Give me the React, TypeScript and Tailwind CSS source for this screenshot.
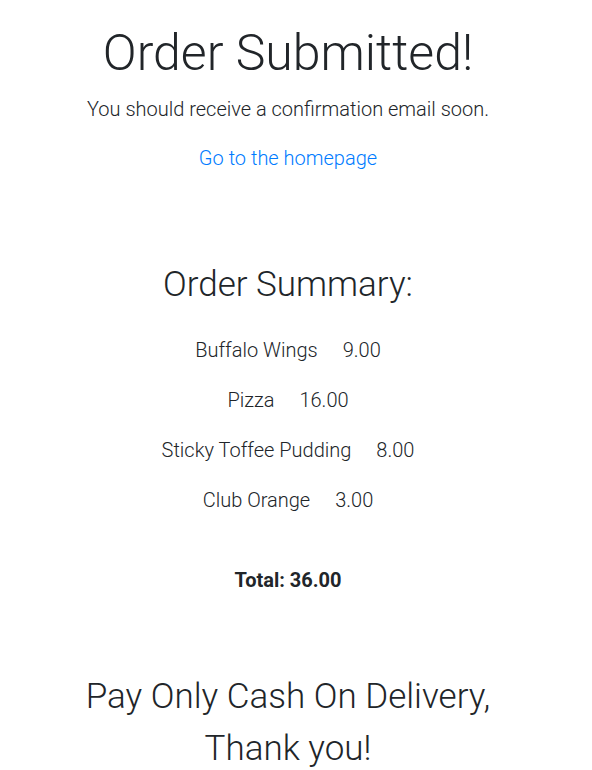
import React from "react";

const items = [
  { name: "Buffalo Wings", price: "9.00" },
  { name: "Pizza", price: "16.00" },
  { name: "Sticky Toffee Pudding", price: "8.00" },
  { name: "Club Orange", price: "3.00" },
];

export default function App() {
  return (
    <div
      className="min-h-[770px] w-full bg-white pr-4 text-center text-[#212529] font-light"
      style={{ fontFamily: "Roboto, 'Liberation Sans', sans-serif" }}
    >
      <h1 className="pt-[23px] text-[50px] leading-[60px] font-light">Order Submitted!</h1>
      <p className="mt-[11px] text-[20px] leading-[30px]">You should receive a confirmation email soon.</p>
      <p className="mt-[19px] text-[20px] leading-[30px]">
        <a href="#" className="text-[#007bff]">Go to the homepage</a>
      </p>
      <h2 className="mt-[91px] text-[35px] leading-[42px] font-light">Order Summary:</h2>
      <div className="mt-[19px] flex flex-col">
        {items.map((it) => (
          <p key={it.name} className="h-[50px] text-[20px] leading-[50px]">
            {it.name}
            <span className="ml-[25px]">{it.price}</span>
          </p>
        ))}
      </div>
      <p className="mt-[40px] text-[20px] leading-[30px] font-bold">Total: 36.00</p>
      <h2 className="mt-[76px] text-[35px] leading-[52px] font-light">
        Pay Only Cash On Delivery,
        <br />
        Thank you!
      </h2>
    </div>
  );
}
